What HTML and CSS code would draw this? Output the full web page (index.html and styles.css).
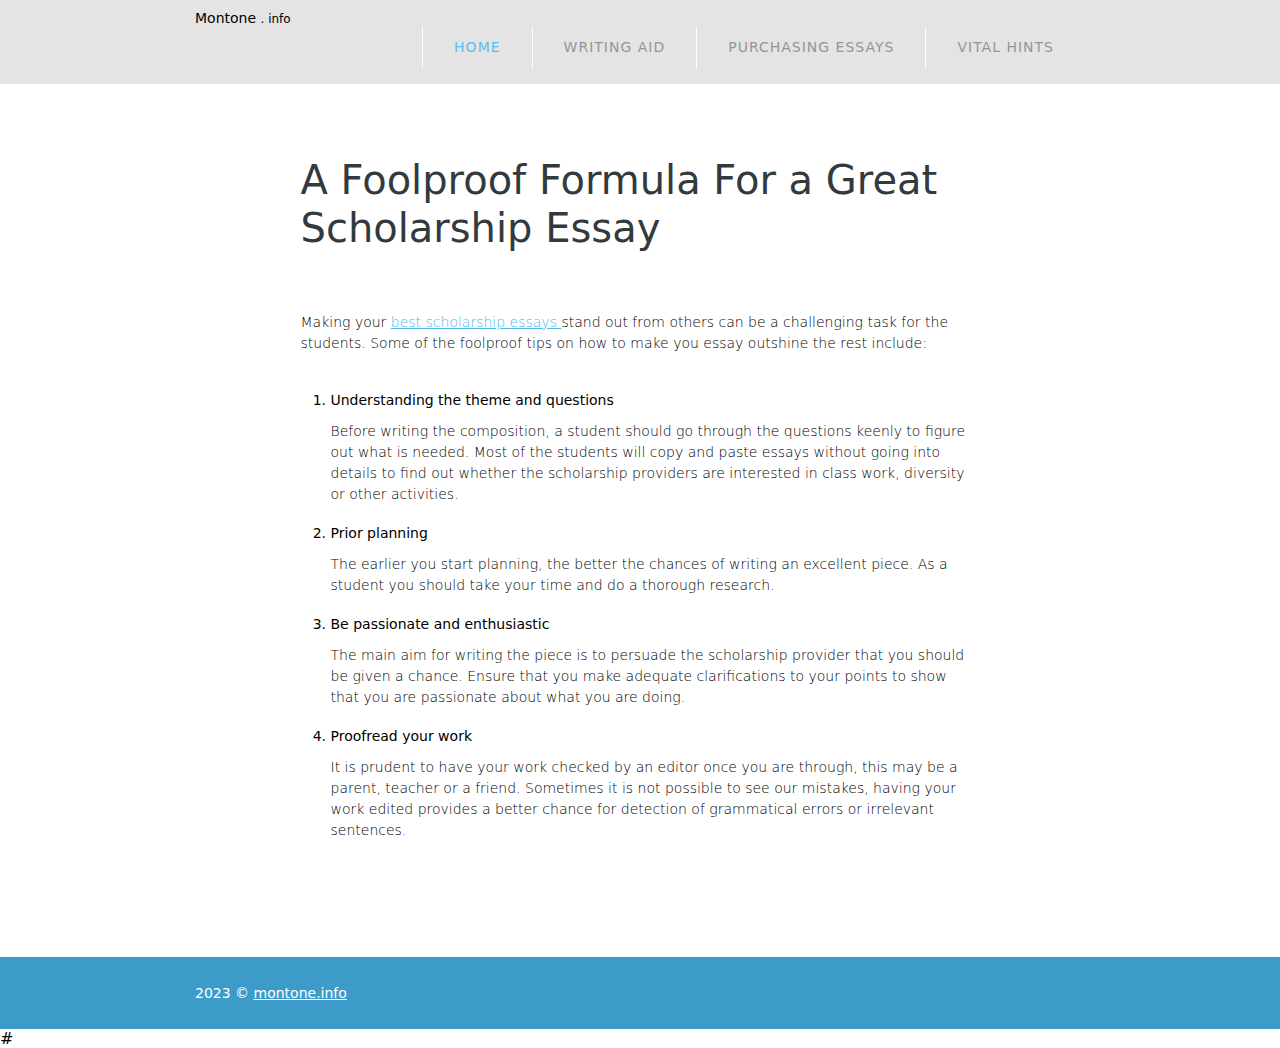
FILE: index.html
```html
<!DOCTYPE html>
<html lang="en">
<head>
<meta charset="utf-8">
<title>A Foolproof Formula For a Great Scholarship Essay</title>
<link rel="stylesheet" href="styles.css">
</head>
<body>
<header class="site-header">
  <div class="container header-inner">
    <div class="brand">Montone <small>. info</small></div>
    <nav>
      <ul class="menu">
        <li><a class="active" href="#">Home</a></li>
        <li><a href="#">Writing Aid</a></li>
        <li><a href="#">Purchasing Essays</a></li>
        <li><a href="#">Vital Hints</a></li>
      </ul>
    </nav>
  </div>
</header>
<main class="article">
  <h1>A Foolproof Formula For a Great Scholarship Essay</h1>
  <p class="intro">Making your <a href="#">best scholarship essays </a>stand out from others can be a challenging task for the students. Some of the foolproof tips on how to make you essay outshine the rest include:</p>
  <ol class="tips">
    <li>Understanding the theme and questions
      <p>Before writing the composition, a student should go through the questions keenly to figure out what is needed. Most of the students will copy and paste essays without going into details to find out whether the scholarship providers are interested in class work, diversity or other activities.</p></li>
    <li>Prior planning
      <p>The earlier you start planning, the better the chances of writing an excellent piece. As a student you should take your time and do a thorough research.</p></li>
    <li>Be passionate and enthusiastic
      <p>The main aim for writing the piece is to persuade the scholarship provider that you should be given a chance. Ensure that you make adequate clarifications to your points to show that you are passionate about what you are doing.</p></li>
    <li>Proofread your work
      <p>It is prudent to have your work checked by an editor once you are through, this may be a parent, teacher or a friend. Sometimes it is not possible to see our mistakes, having your work edited provides a better chance for detection of grammatical errors or irrelevant sentences.</p></li>
  </ol>
</main>
<footer class="site-footer">
  <div class="container">2023 © <a href="#">montone.info</a></div>
</footer>
<div class="trailing">#</div>
</body>
</html>
```
FILE: styles.css
```css
* {
  box-sizing: border-box;
}

body {
  margin: 0;
  background: #fff;
  color: #000;
  font: 14px/21px "DejaVu Sans", sans-serif;
}

.container {
  max-width: 890px;
  margin: 0 auto;
}

.site-header {
  background: #e4e4e4;
  padding: 8px 0 16px;
}

.header-inner {
  display: flex;
  justify-content: space-between;
}

.brand small {
  font-size: 12px;
}

.menu {
  display: flex;
  margin: 19px 0 0;
  padding: 0;
  list-style: none;
}

.menu a {
  display: block;
  padding: 10px 31px;
  border-left: 1px solid #fff;
  color: #959595;
  letter-spacing: 1px;
  text-decoration: none;
  text-transform: uppercase;
}

.menu .active {
  color: #5dbeee;
}

.article {
  max-width: 679px;
  margin: 0 auto;
  padding: 72px 0 116px;
}

h1 {
  margin: 0 0 60px;
  color: #323a40;
  font-size: 40px;
  font-weight: 400;
  line-height: 48px;
}

.article p {
  margin: 0;
  font-weight: 200;
}

.intro a {
  color: #4fb8ec;
}

.tips {
  margin: 36px 0 0;
  padding: 0 10px 0 30px;
}

.tips li {
  margin-bottom: 18px;
}

.tips li:last-child {
  margin-bottom: 0;
}

.tips p {
  padding-top: 10px;
}

.site-footer {
  padding: 26px 0 25px;
  background: #3d9bc9;
  color: #fff;
}

.site-footer a {
  color: #fff;
}

.trailing {
  font-size: 16px;
  line-height: 19px;
}
```
